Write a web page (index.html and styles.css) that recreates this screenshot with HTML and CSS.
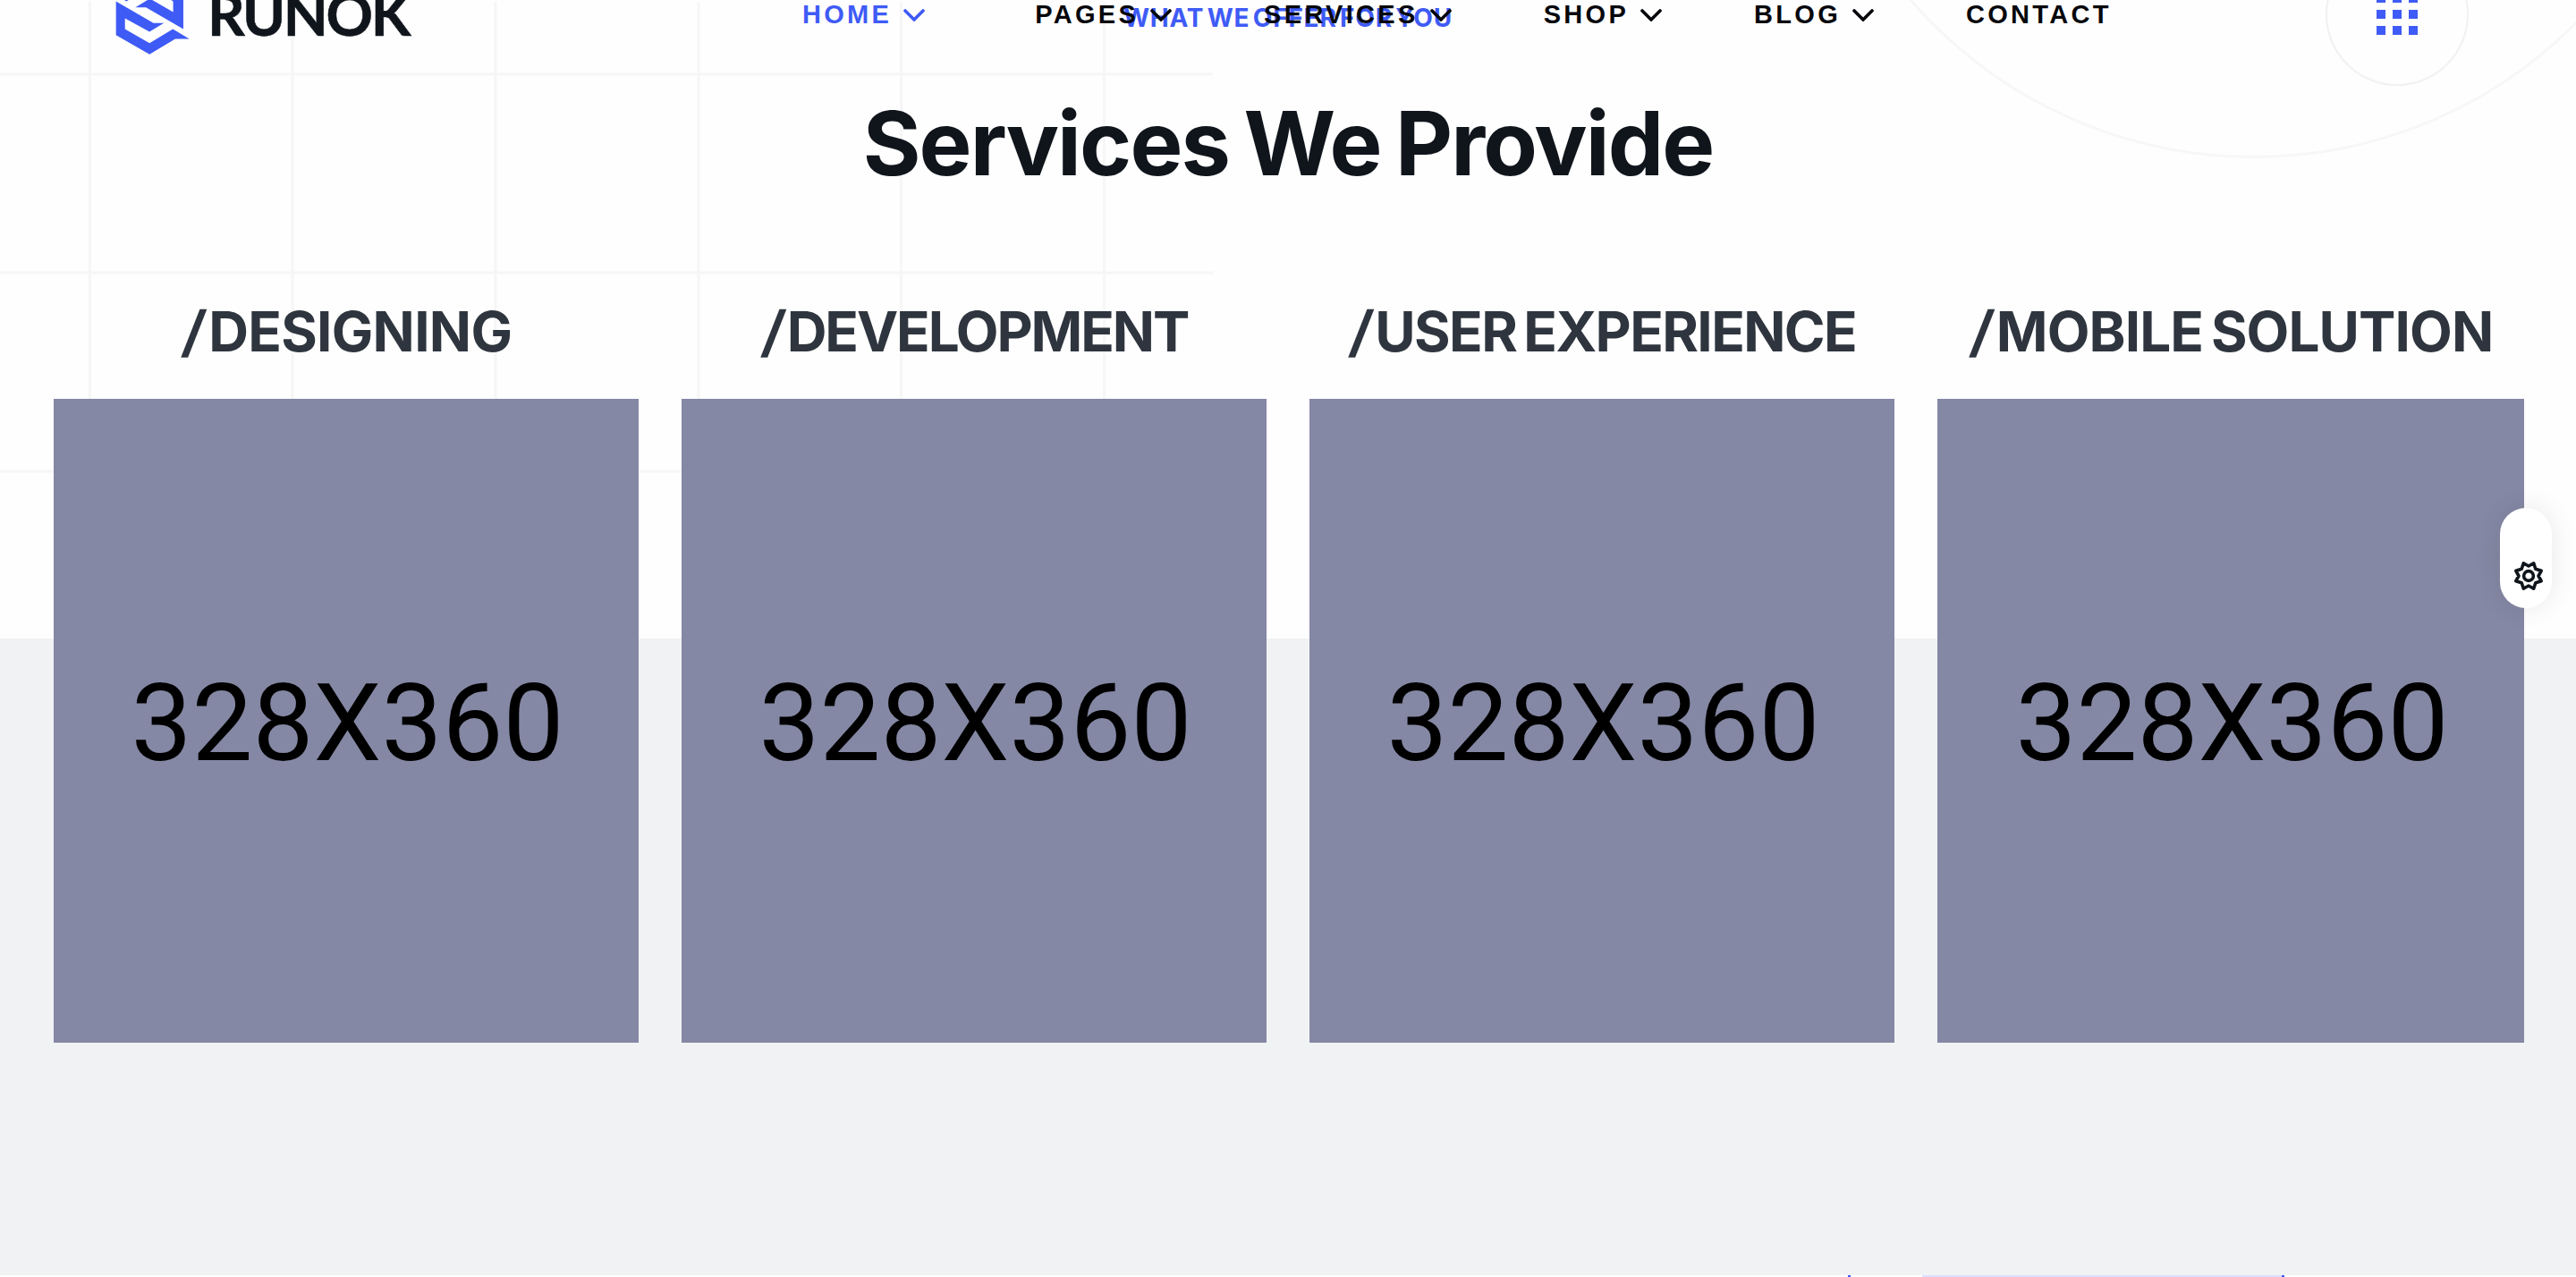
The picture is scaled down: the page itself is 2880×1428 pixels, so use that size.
FILE: index.html
```html
<!DOCTYPE html>
<html lang="en">
<head>
  <meta charset="UTF-8">
  <meta name="viewport" content="width=device-width, initial-scale=1.0">
  <title>Runok</title>
  <link rel="stylesheet" href="styles.css">
</head>
<body>
  <header class="header">
    <a class="logo" href="#">
      <svg class="logo-mark" viewBox="70 -80 266 263">
        <path d="M90 5L215 78H250L202 107L120 62V98L202 145L280 98L335 131H288L202 182L90 118Z"/>
        <path d="M315 98L190 25H155L203 -4L281 41V5L203 -42L125 5L70 -28H117L203 -79L315 -15Z"/>
      </svg>
      <span class="logo-text">RUNOK</span>
    </a>
    <nav class="nav">
      <a class="nav-link active" href="#">HOME <svg class="chevron" viewBox="0 0 24 14"><path d="M2 2L12 12L22 2"/></svg></a>
      <a class="nav-link" href="#">PAGES <svg class="chevron" viewBox="0 0 24 14"><path d="M2 2L12 12L22 2"/></svg></a>
      <a class="nav-link" href="#">SERVICES <svg class="chevron" viewBox="0 0 24 14"><path d="M2 2L12 12L22 2"/></svg></a>
      <a class="nav-link" href="#">SHOP <svg class="chevron" viewBox="0 0 24 14"><path d="M2 2L12 12L22 2"/></svg></a>
      <a class="nav-link" href="#">BLOG <svg class="chevron" viewBox="0 0 24 14"><path d="M2 2L12 12L22 2"/></svg></a>
      <a class="nav-link" href="#">CONTACT</a>
    </nav>
    <div class="menu-btn">
      <span></span><span></span><span></span>
      <span></span><span></span><span></span>
      <span></span><span></span><span></span>
    </div>
  </header>

  <section class="services">
    <!-- background lines -->
    <svg class="shape-grid" viewBox="0 0 1356 700">
      <path d="M100.5 2V700M327 2V700M554 2V700M781 2V700M1007.5 2V700M1234.5 2V700"/>
      <path d="M0 83H1356M0 305H1356M0 527H1356"/>
    </svg>
    <div class="shape-circle"></div>

    <div class="section-title">
      <span class="sub-title">WHAT WE OFFER FOR YOU</span>
      <h2 class="title">Services We Provide</h2>
    </div>
    <div class="cards">
      <div class="card">
        <h3 class="designing"><span class="slash">/</span>DESIGNING</h3>
        <div class="thumb"><span>328X360</span></div>
      </div>
      <div class="card">
        <h3 class="development"><span class="slash">/</span>DEVELOPMENT</h3>
        <div class="thumb"><span>328X360</span></div>
      </div>
      <div class="card">
        <h3 class="experience"><span class="slash">/</span>USER EXPERIENCE</h3>
        <div class="thumb"><span>328X360</span></div>
      </div>
      <div class="card">
        <h3 class="mobile"><span class="slash">/</span>MOBILE SOLUTION</h3>
        <div class="thumb"><span>328X360</span></div>
      </div>
    </div>
  </section>

  <section class="about">
    <div class="about-shape"><div class="about-line"></div></div>
  </section>

  <div class="settings">
    <svg viewBox="-18 -18 36 36">
      <path d="M0 -11L5.7 -14.2L7.8 -7.8L14.2 -5.7L11 0L14.2 5.7L7.8 7.8L5.7 14.2L0 11L-5.7 14.2L-7.8 7.8L-14.2 5.7L-11 0L-14.2 -5.7L-7.8 -7.8L-5.7 -14.2Z"/>
      <circle r="5.4"/>
    </svg>
  </div>
</body>
</html>
```
FILE: styles.css
```css
* {
  box-sizing: border-box;
}
body {
  margin: 0;
  height: 1428px;
  overflow: hidden;
  background-color: #fff;
  font-family: Inter, sans-serif;
  color: #10151c;
}
h2,
h3 {
  margin: 0;
}
a {
  color: inherit;
  text-decoration: none;
}

/* header, scrolled over the section */
.header {
  position: absolute;
  top: -64px;
  left: 0;
  z-index: 5;
  width: 100%;
  height: 160px;
  padding: 0 120px 0 123px;
  display: flex;
  align-items: center;
}
.logo {
  width: 774px;
  display: flex;
  align-items: center;
}
.logo-mark {
  width: 89px;
  height: 88px;
  margin-right: 20px;
  margin-top: 2px;
  fill: #3f5bf6;
}
.logo-text {
  margin-bottom: 3px;
  font-family: Lato, sans-serif;
  font-size: 65px;
  font-weight: 700;
  line-height: 80px;
  letter-spacing: -2.4px;
  -webkit-text-stroke: 0.6px #10151c;
}
.nav {
  flex: 1;
  display: flex;
  gap: 103px;
}
.nav-link {
  display: flex;
  align-items: center;
  gap: 13px;
  font-family: "Liberation Sans", Arial, sans-serif;
  font-size: 29px;
  font-weight: 700;
  line-height: 40px;
  letter-spacing: 3.3px;
  color: #05070b;
}
.nav-link.active {
  margin-right: 20px;
  color: #3f5bf6;
}
.chevron {
  width: 24px;
  height: 14px;
  margin-top: 2px;
  fill: none;
  stroke: currentColor;
  stroke-width: 3.6;
  stroke-linecap: round;
}
.menu-btn {
  width: 160px;
  height: 160px;
  border: 2px solid #f1f1f2;
  border-radius: 50%;
  display: grid;
  grid-template-columns: repeat(3, 10px);
  gap: 8px;
  place-content: center;
}
.menu-btn span {
  height: 10px;
  background-color: #3f5bf6;
}

/* services */
.services {
  position: relative;
  height: 1426px;
  overflow: hidden;
  background: linear-gradient(#fefefe 714px, #f1f2f4 714px);
}
.shape-grid {
  position: absolute;
  top: 0;
  left: 0;
  width: 1356px;
  height: 700px;
  fill: none;
  stroke: #f6f6f6;
  stroke-width: 3;
}
.shape-circle {
  position: absolute;
  top: -841px;
  left: 2011px;
  width: 1018px;
  height: 1018px;
  border: 3px solid #f7f7f7;
  border-radius: 50%;
}
.section-title {
  position: relative;
  display: flex;
  flex-direction: column;
  align-items: center;
}
.sub-title {
  font-size: 28px;
  font-weight: 700;
  line-height: 40px;
  letter-spacing: 0.8px;
  word-spacing: -4px;
  color: #3f5bf6;
}
.title {
  margin-top: 60px;
  font-size: 99px;
  font-weight: 700;
  line-height: 120px;
  letter-spacing: -1.9px;
  word-spacing: -5px;
}
.cards {
  position: relative;
  margin-top: 111px;
  padding-left: 60px;
  display: flex;
  gap: 48px;
}
.card {
  width: 654px;
}
.card:last-child {
  width: 656px;
}
.card h3 {
  margin-bottom: 35px;
  font-size: 62px;
  font-weight: 700;
  line-height: 80px;
  word-spacing: -5px;
  text-align: center;
  white-space: nowrap;
  color: #2e353e;
}
.slash {
  display: inline-block;
  margin: 0 5px 0 3px;
  transform: skewX(-7deg);
}
.designing {
  letter-spacing: -0.7px;
}
.development {
  letter-spacing: -2.1px;
}
.experience {
  letter-spacing: -1.6px;
}
.mobile {
  letter-spacing: -0.9px;
}
.thumb {
  height: 720px;
  padding: 6px 0 0 3px;
  display: flex;
  align-items: center;
  justify-content: center;
  background-color: #8488a4;
  font-family: Roboto, sans-serif;
  font-size: 121px;
  color: #000;
}

/* top edge of the next section */
.about {
  height: 2px;
}
.about-shape {
  width: 488px;
  height: 2px;
  margin-left: 2066px;
  padding-left: 80px;
  border: solid #3f5bf6;
  border-width: 0 3px;
}
.about-line {
  height: 2px;
  background-color: #dbe0ff;
}

/* floating settings button */
.settings {
  position: absolute;
  top: 568px;
  right: 27px;
  z-index: 6;
  width: 58px;
  height: 112px;
  padding: 58px 0 0 14px;
  border-radius: 29px;
  background-color: #fff;
  box-shadow: 0 0 30px rgba(0, 0, 0, 0.09);
}
.settings svg {
  display: block;
  width: 36px;
  height: 36px;
  fill: none;
  stroke: #10151c;
  stroke-width: 3.6;
  stroke-linejoin: round;
}
```
